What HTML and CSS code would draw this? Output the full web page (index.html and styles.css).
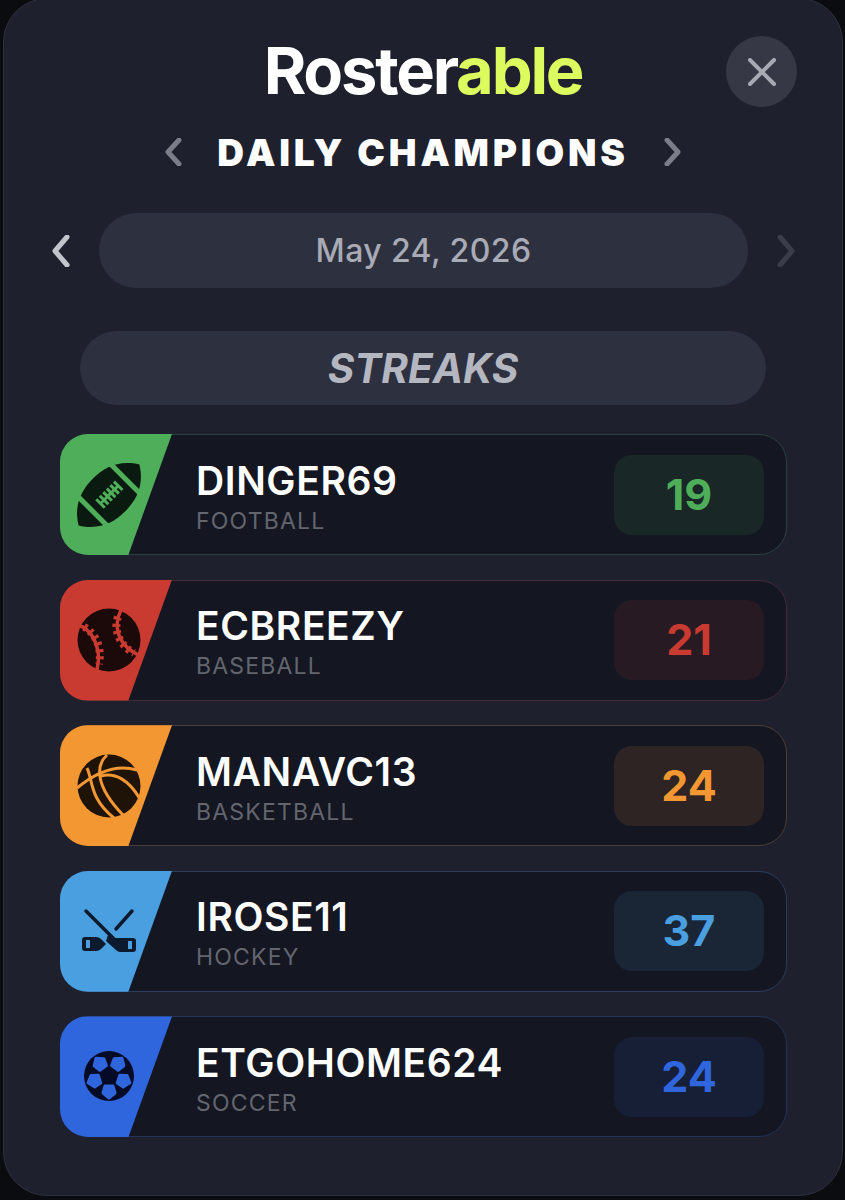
FILE: index.html
```html
<!DOCTYPE html>
<html lang="en">
<head>
    <meta charset="UTF-8">
    <meta name="viewport" content="width=device-width, initial-scale=1.0">
    <title>Rosterable Daily Champions</title>
    <link rel="stylesheet" href="styles.css">
</head>
<body>

<div class="panel">
    <div class="brand">
        <div class="logo">Roster<span class="logo-accent">able</span></div>
        <button class="close" aria-label="Close">
            <svg viewBox="0 0 28 28" width="28" height="28"><path d="M2 2 L26 26 M26 2 L2 26"/></svg>
        </button>
    </div>

    <div class="title-row">
        <svg class="chevron chevron-title" viewBox="0 0 18 28"><path d="M15 2 L4 14 L15 26"/></svg>
        <h2 class="title">DAILY CHAMPIONS</h2>
        <svg class="chevron chevron-title" viewBox="0 0 18 28"><path d="M3 2 L14 14 L3 26"/></svg>
    </div>

    <div class="date-row">
        <svg class="chevron chevron-date" viewBox="0 0 18 32"><path d="M15 2 L3 16 L15 30"/></svg>
        <div class="date-pill">May 24, 2026</div>
        <svg class="chevron chevron-date off" viewBox="0 0 18 32"><path d="M3 2 L15 16 L3 30"/></svg>
    </div>

    <div class="mode-pill">STREAKS</div>

    <div class="list">
        <div class="row football">
            <div class="tile">
                <svg class="icon" viewBox="0 0 64 64">
                    <g transform="rotate(-45 32 32)">
                        <path class="ink" d="M-11 32 C0 14 16 9 32 9 C48 9 64 14 75 32 C64 50 48 55 32 55 C16 55 0 50 -11 32 Z"/>
                        <path class="cut" stroke-width="5" d="M9 2 V62 M55 2 V62"/>
                        <path class="cut" stroke-width="3" d="M19 32 H45 M20 26 V38 M25 26 V38 M30 26 V38 M35 26 V38 M40 26 V38 M45 26 V38"/>
                    </g>
                </svg>
            </div>
            <div class="player">
                <div class="name">DINGER69</div>
                <div class="sport">FOOTBALL</div>
            </div>
            <div class="score">19</div>
        </div>

        <div class="row baseball">
            <div class="tile">
                <svg class="icon" viewBox="0 0 64 64">
                    <circle class="ink" cx="32" cy="32" r="31.5"/>
                    <path class="cut" stroke-width="3.5" d="M1 17 C12 20 26 36 20 62 M44 2 C35 20 42 38 63 48"/>
                    <path class="cut" stroke-width="8" stroke-dasharray="3 4" d="M7 19 C15 23 26 36 22 56 M41 9 C36 22 43 38 57 45"/>
                </svg>
            </div>
            <div class="player">
                <div class="name">ECBREEZY</div>
                <div class="sport">BASEBALL</div>
            </div>
            <div class="score">21</div>
        </div>

        <div class="row basketball">
            <div class="tile">
                <svg class="icon" viewBox="0 0 64 64">
                    <circle class="ink" cx="32" cy="32" r="31.5"/>
                    <path class="cut" stroke-width="3" d="M0 34 C12 24 34 8 60 16 M10 14 C16 26 12 44 37 64 M30 1 C20 10 16 30 46 61 M24 22 C38 18 52 26 63 45"/>
                </svg>
            </div>
            <div class="player">
                <div class="name">MANAVC13</div>
                <div class="sport">BASKETBALL</div>
            </div>
            <div class="score">24</div>
        </div>

        <div class="row hockey">
            <div class="tile">
                <svg class="icon" viewBox="0 0 64 64">
                    <path class="line" d="M9 12 L37 40 M55 12 L39 30"/>
                    <path class="ink" d="M8 38 H19 Q22 38 24 40 L29 45 L24 50 Q22 52 19 52 H8 Q5 52 5 49 V41 Q5 38 8 38 Z"/>
                    <path class="ink" d="M31 36 L38 39 H56 Q59 39 59 42 V50 Q59 53 56 53 H43 Q41 53 39 51 L29 42 Z"/>
                    <rect class="hole" x="9" y="41" width="4" height="8"/>
                    <rect class="hole" x="51" y="42" width="4" height="8"/>
                </svg>
            </div>
            <div class="player">
                <div class="name">IROSE11</div>
                <div class="sport">HOCKEY</div>
            </div>
            <div class="score">37</div>
        </div>

        <div class="row soccer">
            <div class="tile">
                <svg class="icon" viewBox="0 0 64 64">
                    <circle class="ink" cx="32" cy="31" r="25"/>
                    <polygon class="patch" points="32,9 38,14 36,21 28,21 26,14" transform="rotate(36 32 31)"/>
                    <polygon class="patch" points="32,9 38,14 36,21 28,21 26,14" transform="rotate(108 32 31)"/>
                    <polygon class="patch" points="32,9 38,14 36,21 28,21 26,14" transform="rotate(180 32 31)"/>
                    <polygon class="patch" points="32,9 38,14 36,21 28,21 26,14" transform="rotate(252 32 31)"/>
                    <polygon class="patch" points="32,9 38,14 36,21 28,21 26,14" transform="rotate(324 32 31)"/>
                </svg>
            </div>
            <div class="player">
                <div class="name">ETGOHOME624</div>
                <div class="sport">SOCCER</div>
            </div>
            <div class="score">24</div>
        </div>
    </div>
</div>

</body>
</html>
```

FILE: styles.css
```css
* {
    box-sizing: border-box;
}

html, body {
    height: 1200px;
    overflow: hidden;
}

body {
    margin: 0;
    background-color: #0b0c10;
    font-family: Inter, "Liberation Sans", sans-serif;
}

.panel {
    height: 1198px;
    margin: -2px 2px 0 3px;
    padding-top: 37px;
    background-color: #1e202d;
    border: 1px solid #2e303c;
    border-radius: 44px;
}

.brand {
    position: relative;
    height: 70px;
    display: flex;
    justify-content: center;
    align-items: center;
}

.logo {
    font-size: 65px;
    font-weight: 700;
    line-height: 70px;
    letter-spacing: -2.2px;
    color: #fff;
}

.logo-accent {
    color: #dcfb5f;
}

.close {
    position: absolute;
    top: 0;
    right: 45px;
    width: 71px;
    height: 71px;
    padding: 0;
    display: flex;
    justify-content: center;
    align-items: center;
    border: none;
    border-radius: 50%;
    background-color: #363945;
}

.close svg {
    fill: none;
    stroke: #a8aab3;
    stroke-width: 4;
    stroke-linecap: round;
}

.title-row {
    height: 50px;
    margin-top: 21px;
    display: flex;
    justify-content: center;
    align-items: center;
    gap: 35px;
}

.title {
    margin: 0;
    font-size: 37px;
    font-weight: 900;
    letter-spacing: 3.8px;
    color: #fff;
}

.chevron {
    fill: none;
    stroke-width: 5;
    stroke-linecap: round;
    stroke-linejoin: round;
}

.chevron-title {
    width: 18px;
    height: 28px;
    stroke: #7b7e88;
}

.chevron-date {
    width: 18px;
    height: 32px;
    stroke: #c3c5cc;
}

.chevron-date.off {
    stroke: #3b3e4a;
}

.date-row {
    height: 75px;
    margin-top: 36px;
    padding: 0 47px 0 48px;
    display: flex;
    align-items: center;
    gap: 29px;
}

.date-pill {
    flex: 1;
    height: 75px;
    display: flex;
    justify-content: center;
    align-items: center;
    border-radius: 38px;
    background-color: #2d303e;
    font-size: 32px;
    font-weight: 500;
    letter-spacing: 0.4px;
    color: #a8abb6;
}

.mode-pill {
    height: 74px;
    margin: 43px 76px 0;
    display: flex;
    justify-content: center;
    align-items: center;
    border-radius: 37px;
    background-color: #2d303e;
    font-size: 40.5px;
    font-weight: 700;
    font-style: italic;
    color: #b4b6c0;
}

.list {
    margin: 29px 55px 0 56px;
    display: flex;
    flex-direction: column;
    gap: 24.6px;
}

.row {
    height: 121px;
    display: flex;
    align-items: center;
    border: 1px solid color-mix(in srgb, var(--sport) 20%, #23263a);
    border-radius: 28px;
    background-color: #141621;
}

.football { --sport: #4eae5a; --ink: #0b1a10; }
.baseball { --sport: #c93b30; --ink: #1c0a0b; }
.basketball { --sport: #f39733; --ink: #1f1308; }
.hockey { --sport: #4a9fe0; --ink: #0b1b2d; }
.soccer { --sport: #2f66dd; --ink: #050b26; }

.tile {
    width: 112px;
    height: 121px;
    margin: -1px 0 -1px -1px;
    padding-left: 17px;
    flex-shrink: 0;
    display: flex;
    align-items: center;
    border-radius: 28px 0 0 28px;
    background-color: var(--sport);
    clip-path: polygon(0 0, 100% 0, 61% 100%, 0 100%);
}

.icon {
    width: 64px;
    height: 64px;
    overflow: visible;
}

.ink {
    fill: var(--ink);
}

.cut {
    fill: none;
    stroke: var(--sport);
}

.line {
    fill: none;
    stroke: var(--ink);
    stroke-width: 3.5;
    stroke-linecap: round;
}

.hole {
    fill: var(--sport);
}

.patch {
    fill: var(--sport);
    stroke: var(--sport);
    stroke-width: 3;
    stroke-linejoin: round;
}

.player {
    margin-left: 24px;
    padding-top: 4px;
}

.name {
    font-size: 39px;
    font-weight: 600;
    line-height: 46px;
    letter-spacing: 0.6px;
    color: #fff;
}

.sport {
    margin-top: 2px;
    font-size: 23px;
    line-height: 30px;
    letter-spacing: 1.2px;
    color: #63656f;
}

.score {
    width: 150px;
    height: 80px;
    margin-left: auto;
    margin-right: 22px;
    padding-bottom: 2px;
    display: flex;
    justify-content: center;
    align-items: center;
    border-radius: 18px;
    background-color: color-mix(in srgb, var(--sport) 11%, #141621);
    font-size: 43px;
    font-weight: 700;
    color: var(--sport);
}
```
